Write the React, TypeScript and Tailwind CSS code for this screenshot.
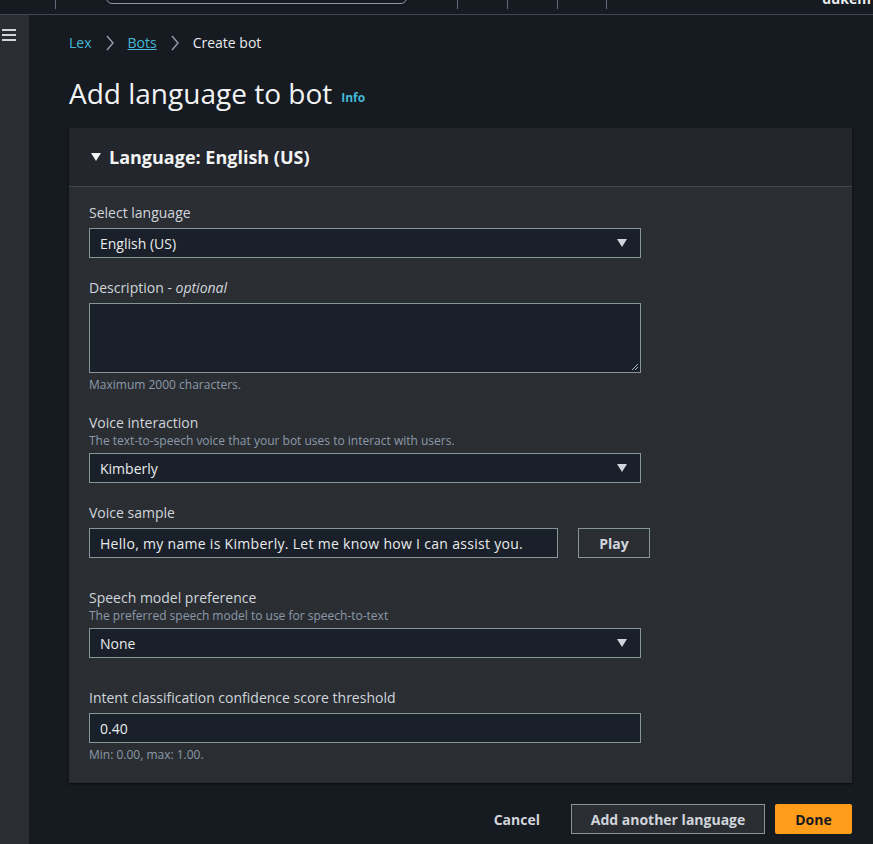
import React from "react";

const font = { fontFamily: "'Open Sans', 'Liberation Sans', sans-serif" };

function Caret({ className = "" }: { className?: string }) {
	return (
		<svg width="12" height="10" viewBox="0 0 12 10" className={className}>
			<path d="M1 1h10L6 9z" fill="currentColor" />
		</svg>
	);
}

function Chevron() {
	return (
		<svg width="10" height="16" viewBox="0 0 10 16" className="text-[#8d99a8]">
			<path d="M2 1l6 7-6 7" fill="none" stroke="currentColor" strokeWidth="1.5" />
		</svg>
	);
}

function Field({ label, desc, children, hint }: { label: React.ReactNode; desc?: string; children: React.ReactNode; hint?: string }) {
	return (
		<div className="flex flex-col">
			<div className="text-[14px] leading-[20px] text-[#d1d5db]">{label}</div>
			{desc && <div className="text-[12px] leading-[16px] text-[#8d99a8]">{desc}</div>}
			<div className={desc ? "mt-[4px]" : "mt-[5px]"}>{children}</div>
			{hint && <div className="mt-[4px] text-[12px] leading-[16px] text-[#8d99a8]">{hint}</div>}
		</div>
	);
}

function Select({ value }: { value: string }) {
	return (
		<div className="flex h-[30px] w-[552px] items-center justify-between border border-[#879596] bg-[#1a2029] pl-[10px] pr-[12px] text-[14px] text-[#e9ebed]">
			<span>{value}</span>
			<Caret className="text-[#d1d5db]" />
		</div>
	);
}

export default function App() {
	return (
		<div className="flex h-[844px] w-[873px] flex-col overflow-hidden bg-[#161a21]" style={font}>
			{/* top nav, mostly scrolled off */}
			<div className="relative flex h-[15px] shrink-0 border-b border-[#414750] bg-[#161a21]">
				<div className="ml-[55px] h-[9px] w-px bg-[#5f6b7a]" />
				<div className="ml-[50px] mt-[-26px] h-[30px] w-[301px] rounded-[6px] border border-[#8d99a8]" />
				<div className="ml-[50px] h-[9px] w-px bg-[#5f6b7a]" />
				<div className="ml-[49px] h-[9px] w-px bg-[#5f6b7a]" />
				<div className="ml-[49px] h-[9px] w-px bg-[#5f6b7a]" />
				<div className="ml-[48px] h-[9px] w-px bg-[#5f6b7a]" />
				<div className="ml-auto mr-[2px] mt-[-8px] text-[14px] font-bold leading-[14px] text-[#e9ebed]">dukem</div>
			</div>

			<div className="flex min-h-0 flex-1">
				{/* side rail */}
				<div className="w-[29px] shrink-0 bg-[#2a2e33] pt-[14px]">
					<div className="ml-[2px] flex w-[14px] flex-col gap-[3px]">
						<div className="h-[2px] bg-[#d1d5db]" />
						<div className="h-[2px] bg-[#d1d5db]" />
						<div className="h-[2px] bg-[#d1d5db]" />
					</div>
				</div>

				<div className="flex flex-1 flex-col pl-[40px] pr-[21px]">
					{/* breadcrumbs */}
					<div className="mt-[18px] flex items-center text-[14px] leading-[20px]">
						<span className="text-[#44b9d6]">Lex</span>
						<span className="mx-[13px] flex"><Chevron /></span>
						<span className="text-[#44b9d6] underline">Bots</span>
						<span className="mx-[13px] flex"><Chevron /></span>
						<span className="text-[#e9ebed]">Create bot</span>
					</div>

					<div className="mt-[22px] flex items-end">
						<h1 className="text-[28px] leading-[36px] text-[#f2f3f3]">Add language to bot</h1>
						<span className="mb-[4px] ml-[9px] text-[12px] font-bold text-[#44b9d6]">Info</span>
					</div>

					{/* container */}
					<div className="mt-[17px] flex flex-col bg-[#2a2e33] shadow-[0_1px_2px_rgba(0,0,0,0.6)]">
						<div className="flex h-[59px] items-center border-b border-[#414750] bg-[#23272d] pl-[21px]">
							<Caret className="text-[#f2f3f3]" />
							<span className="ml-[7px] text-[18px] font-bold text-[#f2f3f3]">Language: English (US)</span>
						</div>

						<div className="flex flex-col gap-[20px] px-[20px] pt-[16px] pb-[20px]">
							<Field label="Select language">
								<Select value="English (US)" />
							</Field>

							<Field
								label={<>Description - <i>optional</i></>}
								hint="Maximum 2000 characters."
							>
								<div className="relative h-[70px] w-[552px] border border-[#879596] bg-[#1a2029]">
									<svg width="8" height="8" viewBox="0 0 8 8" className="absolute bottom-[1px] right-[1px] text-[#aab7b8]">
										<path d="M7 1L1 7M7 4L4 7" stroke="currentColor" strokeWidth="1" />
									</svg>
								</div>
							</Field>

							<Field label="Voice interaction" desc="The text-to-speech voice that your bot uses to interact with users.">
								<Select value="Kimberly" />
							</Field>

							<Field label="Voice sample">
								<div className="flex items-center">
									<div className="flex h-[30px] w-[469px] items-center border border-[#879596] bg-[#1a2029] pl-[10px] text-[14px] tracking-[0.3px] text-[#e9ebed]">
										Hello, my name is Kimberly. Let me know how I can assist you.
									</div>
									<div className="ml-[20px] flex h-[30px] w-[72px] items-center justify-center border border-[#879596] text-[14px] font-bold text-[#d1d5db]">
										Play
									</div>
								</div>
							</Field>

							<div className="mt-[10px]">
								<Field label="Speech model preference" desc="The preferred speech model to use for speech-to-text">
									<Select value="None" />
								</Field>
							</div>

							<div className="mt-[10px]">
								<Field label="Intent classification confidence score threshold" hint="Min: 0.00, max: 1.00.">
									<div className="flex h-[30px] w-[552px] items-center border border-[#879596] bg-[#1a2029] pl-[10px] text-[14px] text-[#e9ebed]">
										0.40
									</div>
								</Field>
							</div>
						</div>
					</div>

					{/* actions */}
					<div className="mt-[21px] flex items-center justify-end">
						<span className="mr-[31px] text-[14px] font-bold text-[#d1d5db]">Cancel</span>
						<div className="flex h-[30px] w-[194px] items-center justify-center border border-[#879596] bg-[#2a2e33] text-[14px] font-bold text-[#d1d5db]">
							Add another language
						</div>
						<div className="ml-[10px] flex h-[30px] w-[77px] items-center justify-center rounded-[2px] bg-[#ff9d1a] text-[14px] font-bold text-[#16191f]">
							Done
						</div>
					</div>
				</div>
			</div>
		</div>
	);
}
